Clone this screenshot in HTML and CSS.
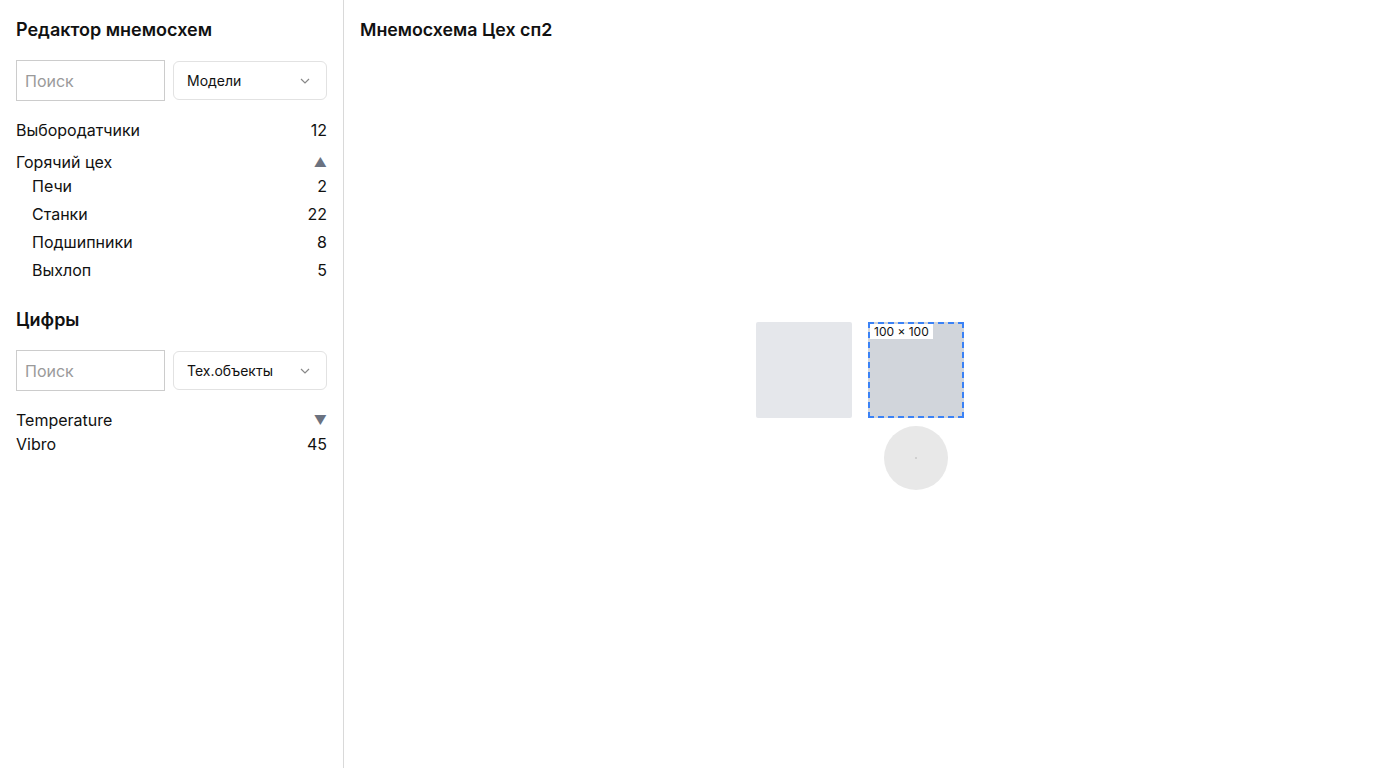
FILE: index.html
```html
<!DOCTYPE html>
<html lang="ru">
<head>
<meta charset="utf-8">
<title>Редактор мнемосхем</title>
<link rel="stylesheet" href="styles.css">
</head>
<body>
<div class="app">
  <aside class="sidebar">
    <h2 class="title">Редактор мнемосхем</h2>
    <div class="controls">
      <input class="search" type="text" placeholder="Поиск">
      <div class="select"><span>Модели</span>
        <svg width="10" height="6" viewBox="0 0 10 6"><path d="M1 1l4 4 4-4" fill="none" stroke="#888" stroke-width="1.2"/></svg>
      </div>
    </div>
    <ul class="list">
      <li class="row"><span>Выбородатчики</span><span>12</span></li>
      <li class="row group"><span>Горячий цех</span><span class="tri">▲</span></li>
      <li class="row child"><span>Печи</span><span>2</span></li>
      <li class="row child"><span>Станки</span><span>22</span></li>
      <li class="row child"><span>Подшипники</span><span>8</span></li>
      <li class="row child"><span>Выхлоп</span><span>5</span></li>
    </ul>
    <h2 class="title second">Цифры</h2>
    <div class="controls">
      <input class="search" type="text" placeholder="Поиск">
      <div class="select"><span>Тех.объекты</span>
        <svg width="10" height="6" viewBox="0 0 10 6"><path d="M1 1l4 4 4-4" fill="none" stroke="#888" stroke-width="1.2"/></svg>
      </div>
    </div>
    <ul class="list">
      <li class="row"><span>Temperature</span><span class="tri">▼</span></li>
      <li class="row"><span>Vibro</span><span>45</span></li>
    </ul>
  </aside>
  <main class="main">
    <h2 class="title main-title">Мнемосхема Цех сп2</h2>
    <div class="canvas">
      <div class="node n1"></div>
      <div class="node n2 selected"><span class="size">100 × 100</span></div>
      <div class="node n3"><span class="dot"></span></div>
    </div>
  </main>
</div>
</body>
</html>
```
FILE: styles.css
```css
* { box-sizing: border-box; }
html, body { margin: 0; height: 100%; }
body {
  font-family: Inter, "Noto Sans", sans-serif;
  color: #111;
  background: #fff;
}
.app { display: flex; height: 768px; }
.sidebar {
  width: 344px;
  flex: none;
  border-right: 1px solid #d9d9d9;
  padding: 19px 16px 0 16px;
}
.title {
  font-size: 18px;
  font-weight: 600;
  margin: 0;
  line-height: 22px;
}
.main-title { font-size: 17.8px; }
.controls {
  display: flex;
  gap: 8px;
  margin-top: 19px;
}
.search {
  width: 149px;
  height: 41px;
  border: 1px solid #ccc;
  border-radius: 0;
  padding: 0 8px;
  font: 16px Inter, sans-serif;
  color: #111;
  outline: none;
}
.search::placeholder { color: #9a9a9a; }
.select {
  flex: 1;
  height: 39px;
  margin-top: 1px;
  border: 1px solid #e2e2e2;
  border-radius: 6px;
  display: flex;
  align-items: center;
  justify-content: space-between;
  padding: 0 16px 0 13px;
  font-size: 14px;
}
.list { list-style: none; margin: 17px 0 0 0; padding: 0; }
.row {
  display: flex;
  justify-content: space-between;
  align-items: center;
  font-size: 16px;
  height: 24px;
}
.row.group { margin-top: 10px; height: 20px; }
.row.child { padding-left: 16px; height: 28px; }
.tri { color: #6b7280; font-size: 13px; }
.second { margin-top: 25px; }
.main { flex: 1; position: relative; padding: 19px 16px; }
.canvas { position: absolute; inset: 0; }
.node { position: absolute; }
.n1 { left: 412px; top: 322px; width: 96px; height: 96px; background: #e5e7eb; border-radius: 2px; }
.n2 { left: 524px; top: 322px; width: 96px; height: 96px; background: #d1d5db; border: 2px dashed #3b82f6; }
.size {
  position: absolute; top: 0; left: 0;
  background: #fff; font-size: 12px; line-height: 15px; padding: 0 4px; color: #111;
}
.n3 { left: 540px; top: 426px; width: 64px; height: 64px; border-radius: 50%; background: #e8e8e8; display: flex; align-items: center; justify-content: center; }
.dot { width: 2px; height: 2px; border-radius: 50%; background: #c8c8c8; }
```
